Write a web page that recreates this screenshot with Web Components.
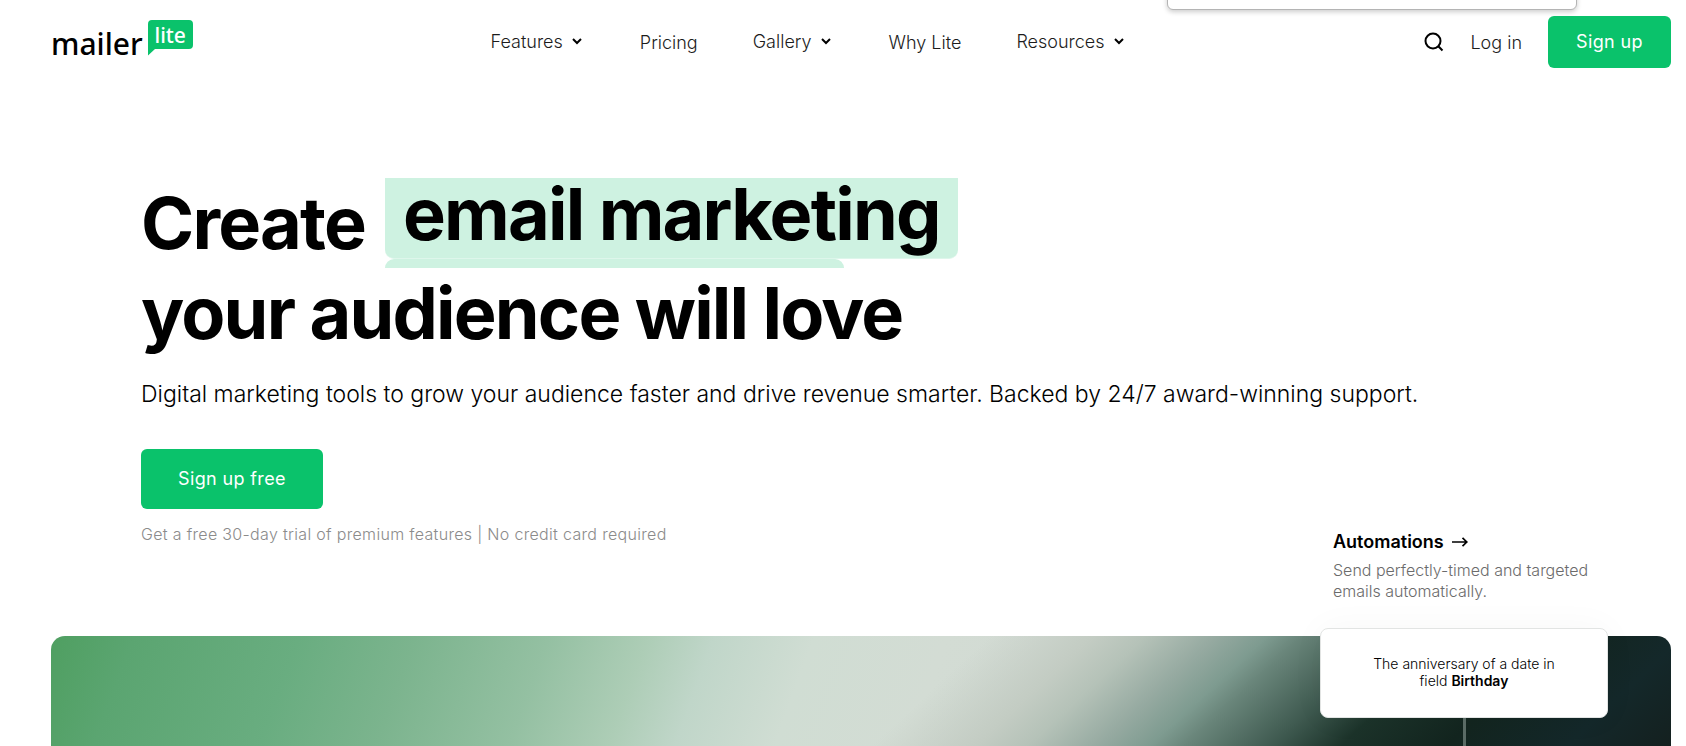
<!DOCTYPE html>
<html lang="en">
<head>
<meta charset="utf-8">
<meta name="viewport" content="width=device-width, initial-scale=1">
<title>MailerLite</title>
<style>
  body { margin: 0; background: #fff; color: #000; font-family: Inter, "Liberation Sans", sans-serif; --green: #0ac26b; --mint: #cef2e1; }
  b { font-weight: 600; }
</style>
</head>
<body>
<mail-page>
  <site-header slot="header"></site-header>
  <hero-intro slot="intro"></hero-intro>
  <hero-banner slot="banner">
    <feature-callout>
      <span slot="title">Automations</span>
      <span slot="text">Send perfectly-timed and targeted emails automatically.</span>
      <span slot="card">The anniversary of a date in<br>field <b>Birthday</b></span>
    </feature-callout>
  </hero-banner>
</mail-page>

<script>
const define = (name, html) => {
  const template = document.createElement('template');
  template.innerHTML = html;
  customElements.define(name, class extends HTMLElement {
    constructor() {
      super();
      this.attachShadow({ mode: 'open' }).append(template.content.cloneNode(true));
    }
  });
};

define('mail-page', `
  <style>
    :host { display: flex; flex-direction: column; min-height: 100vh; position: relative; overflow: hidden; box-sizing: border-box; padding: 0 15px 0 51px; }
    .popup { position: absolute; top: -32px; right: 109px; width: 410px; height: 42px; box-sizing: border-box; border: 1px solid #b4b4b4; border-radius: 6px; background: #fff; box-shadow: 0 2px 5px #0003; }
    main { display: flex; flex-direction: column; flex: 1; }
  </style>
  <slot name="header"></slot>
  <main><slot name="intro"></slot><slot name="banner"></slot></main>
  <div class="popup"></div>`);

define('brand-logo', `
  <style>
    :host { display: block; }
    a { display: flex; gap: 5px; color: #000; text-decoration: none; font-family: "Noto Sans", sans-serif; }
    .mailer { font-size: 30px; font-weight: 500; line-height: 36px; padding-top: 6px; }
    .lite { position: relative; width: 45px; height: 36px; font-size: 21px; font-weight: 500; line-height: 30px; text-align: center; color: #fff; }
    svg { position: absolute; inset: 0; }
    .lite span { position: relative; }
  </style>
  <a href="#"><span class="mailer">mailer</span><span class="lite"><svg width="45" height="36" viewBox="0 0 45 36" aria-hidden="true"><path fill="#0ac26b" d="M4 0H41Q45 0 45 4V25Q45 29 41 29H7L0 35.500V4Q0 0 4 0Z"/></svg><span>lite</span></span></a>`);

define('nav-item', `
  <style>
    :host { display: block; }
    button { display: flex; align-items: center; gap: 6px; border: 0; padding: 0; background: none; color: #1c1c1c; font: 300 18px/24px Inter, sans-serif; }
    svg { color: #000; }
  </style>
  <button type="button" aria-haspopup="true"><slot></slot><svg width="16" height="16" viewBox="0 0 16 16" aria-hidden="true"><path d="M4 5l4 4 4-4" fill="none" stroke="currentColor" stroke-width="2"/></svg></button>`);

define('nav-link', `
  <style>
    :host { display: block; }
    a { display: block; padding-top: 2px; color: #1c1c1c; font: 300 18px/24px Inter, sans-serif; text-decoration: none; }
  </style>
  <a href="#"><slot></slot></a>`);

define('cta-link', `
  <style>
    :host { display: block; width: fit-content; --w: 123px; --h: 52px; }
    a { display: flex; align-items: center; justify-content: center; width: var(--w); height: var(--h); border-radius: 6px; background: var(--green); color: #fff; font: 400 18px/24px Inter, sans-serif; letter-spacing: .02em; text-decoration: none; }
  </style>
  <a href="#"><slot></slot></a>`);

define('site-header', `
  <style>
    :host { display: block; }
    header { display: flex; justify-content: space-between; align-items: center; height: 84px; }
    brand-logo { padding-bottom: 2px; }
    nav { display: flex; align-items: center; gap: 55px; }
    .actions { display: flex; align-items: center; gap: 26px; }
    button { display: block; padding: 0; border: 0; background: none; line-height: 0; color: #000; }
  </style>
  <header>
    <brand-logo></brand-logo>
    <nav aria-label="Main">
      <nav-item>Features</nav-item><nav-link>Pricing</nav-link><nav-item>Gallery</nav-item><nav-link>Why Lite</nav-link><nav-item>Resources</nav-item>
    </nav>
    <div class="actions">
      <button type="button" aria-label="Search"><svg width="20" height="20" viewBox="0 0 20 20" aria-hidden="true" fill="none" stroke="currentColor" stroke-width="2"><circle cx="9" cy="9" r="7.500"/><path d="M14.300 14.300L18.500 18.500"/></svg></button>
      <nav-link>Log in</nav-link>
      <cta-link>Sign up</cta-link>
    </div>
  </header>`);

define('word-reel', `
  <style>
    :host { display: inline-flex; flex-direction: column; height: 90px; }
    .word { height: 81px; line-height: 72px; box-sizing: border-box; padding: 0 18px; border-radius: 0 0 9px 9px; background: var(--mint); border-bottom: 1px solid #def6eb; }
    .next { width: 459px; height: 9px; border-radius: 9px 9px 0 0; background: var(--mint); }
  </style>
  <span class="word"><slot></slot></span><span class="next"></span>`);

define('hero-intro', `
  <style>
    :host { display: block; padding: 94px 90px 0; }
    h1 { margin: 0; font-size: 72px; font-weight: 700; line-height: 90px; letter-spacing: -.025em; }
    .line { display: flex; gap: 20px; }
    .lead { margin: 20px 0 0; font-size: 23px; font-weight: 300; line-height: 32px; }
    cta-link { --w: 182px; --h: 60px; margin-top: 39px; }
    .note { margin: 13px 0 0; color: #8b8b8b; font-size: 16px; font-weight: 300; line-height: 24px; letter-spacing: .02em; }
  </style>
  <h1><span class="line"><span>Create</span> <word-reel>email marketing</word-reel></span> your audience will love</h1>
  <p class="lead">Digital marketing tools to grow your audience faster and drive revenue smarter. Backed by 24/7 award-winning support.</p>
  <cta-link>Sign up free</cta-link>
  <p class="note">Get a free 30-day trial of premium features | No credit card required</p>`);

define('hero-banner', `
  <style>
    :host { display: flex; flex: 1; margin-top: 90px; min-height: 110px; position: relative; }
    .art { flex: 1; border-radius: 14px 14px 0 0; background:
      linear-gradient(137deg, #cdd5cc00 54%, #c3ccc3 60%, #b5c2b8 63%, #96aaa1 67%, #7e9b90 70%, #69857a 72%, #3f5a50 77%, #1c332a 81%, #13251f 87%, #14282a 94%, #14201f),
      linear-gradient(110deg, #4f9f61, #5ba571 5%, #69ad80 15%, #7cb48e 22%, #94c0a2 30%, #adcdb6 36%, #c0d6c9 40%, #d0ddd3 46%, #d3dcd4 54%, #d2dad3 60%); }
  </style>
  <div class="art"></div><slot></slot>`);

define('feature-callout', `
  <style>
    :host { display: flex; flex-direction: column; position: absolute; top: -108px; right: 63px; width: 288px; height: calc(100% + 108px); }
    .head { padding: 0 13px; }
    a { display: flex; align-items: center; gap: 8px; color: #000; font-size: 18px; font-weight: 600; line-height: 28px; text-decoration: none; }
    p { margin: 4px 0 0; color: #6b6b6b; font-size: 16px; font-weight: 300; line-height: 21px; }
    .card { display: flex; align-items: center; justify-content: center; box-sizing: border-box; height: 90px; flex: none; margin-top: 26px; padding: 0 48px 2px; border: 1px solid #e2e4e3; border-radius: 8px; background: #fff; box-shadow: 0 0 36px #00000009; font-size: 14px; font-weight: 300; line-height: 17px; text-align: center; }
    .stem { flex: 1; width: 3px; align-self: center; background: #5a6b65; }
  </style>
  <div class="head">
    <a href="#"><slot name="title"></slot><svg width="16" height="12" viewBox="0 0 16 12" aria-hidden="true"><path d="M0 6H14.500M10.500 1.800L14.800 6l-4.300 4.200" fill="none" stroke="currentColor" stroke-width="1.700"/></svg></a>
    <p><slot name="text"></slot></p>
  </div>
  <div class="card"><div><slot name="card"></slot></div></div>
  <div class="stem"></div>`);
</script>
</body>
</html>
